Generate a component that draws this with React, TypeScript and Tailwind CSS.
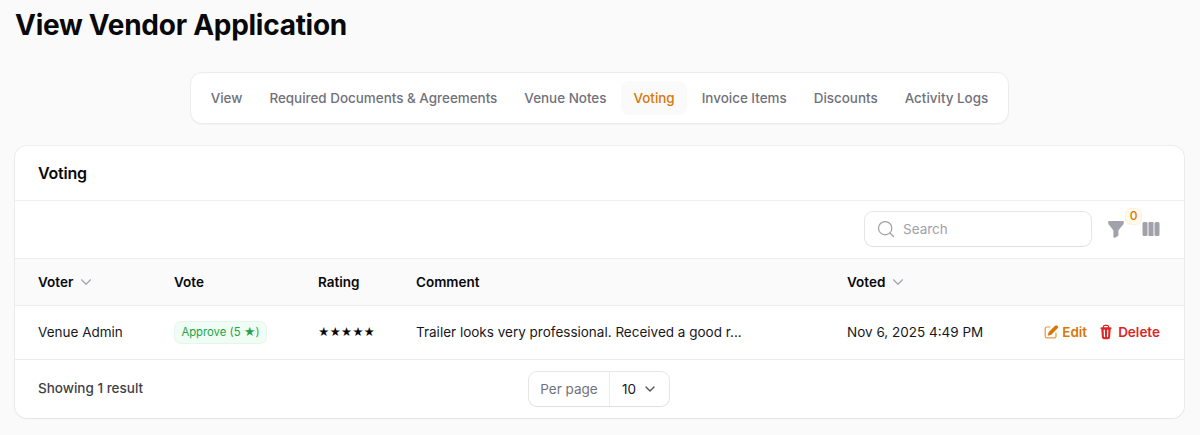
import React from "react";
import { ChevronDown, Search } from "lucide-react";

const tabs = ["View", "Required Documents & Agreements", "Venue Notes", "Voting", "Invoice Items", "Discounts", "Activity Logs"];

function SortHead({ label }: { label: string }) {
  return (
    <span className="flex items-center gap-[4px]">
      <span>{label}</span>
      <ChevronDown className="h-[18px] w-[18px] text-[#a1a1aa]" strokeWidth={1.5} />
    </span>
  );
}

export default function App() {
  return (
    <div className="h-[435px] w-[1200px] overflow-hidden bg-[#fafafa] px-[15px] font-['Inter',sans-serif] text-[#09090b]">
      <h1 className="pt-[7px] text-[28px] font-bold leading-[36px] tracking-[-0.27px]">View Vendor Application</h1>

      <div className="mt-[29px] flex w-[1169px] justify-center">
        <nav className="flex gap-x-[3px] rounded-xl border border-[#ececee] bg-white px-[7.5px] py-[8px] shadow-[0_1px_1px_rgba(0,0,0,0.03)]">
          {tabs.map((t) => (
            <span
              key={t}
              className={
                "rounded-lg px-3 py-[7px] text-[13.43px] font-medium leading-5 " +
                (t === "Voting" ? "bg-[#fafafa] text-[#d97706]" : "text-[#71717a]")
              }
            >
              {t}
            </span>
          ))}
        </nav>
      </div>

      <section className="mt-[22px] w-[1169px] overflow-hidden rounded-xl bg-white shadow-[0_1px_2px_rgba(0,0,0,0.04)] ring-1 ring-[#09090b]/5">
        <header className="flex h-[55px] items-center border-b border-[#f0f0f1] px-[23px] text-base font-semibold leading-6 tracking-[-0.2px]">
          Voting
        </header>

        <div className="flex h-[58px] items-center justify-end gap-x-4 border-b border-[#ececee] pb-[2px] pl-6 pr-[23px]">
          <label className="mr-[-1px] flex h-[34px] w-[226px] items-center gap-x-[7px] rounded-lg bg-white px-[11px] shadow-[0_1px_1px_rgba(0,0,0,0.03)] ring-1 ring-[#09090b]/10">
            <Search className="h-5 w-5 shrink-0 text-[#a1a1aa]" strokeWidth={1.5} />
            <span className="text-[13.5px] leading-5 text-[#a1a1aa]">Search</span>
          </label>
          <div className="relative flex items-center">
            <svg viewBox="0 0 20 20" className="h-5 w-5 text-[#a1a1aa]" fill="currentColor">
              <path d="M2.2 2.9C2.2 2.4 2.7 2 3.3 2h13.4c.6 0 1.1.4 1.1.9 0 1.4-.3 2.6-1 3.2l-3.9 4.6c-.4.4-.5.9-.5 1.4v4.1c0 .4-.2.7-.5.9l-3 1.6c-.7.4-1.5-.1-1.5-.9v-5.7c0-.5-.2-1-.5-1.4L3.2 6.1c-.6-.6-1-1.8-1-3.2z" />
            </svg>
            <span className="absolute -top-[10px] left-[20px] flex h-[15px] min-w-[15px] items-center justify-center rounded-[5px] bg-[#fffbeb] px-[2px] text-[12px] font-medium leading-none text-[#d97706] ring-1 ring-[#d97706]/10">
              0
            </span>
          </div>
          <svg viewBox="0 0 20 20" className="ml-[-1px] h-5 w-5 text-[#a1a1aa]" fill="currentColor">
            <rect x="1.5" y="3" width="5" height="14" rx="1.5" />
            <rect x="7.5" y="3" width="5" height="14" />
            <rect x="13.5" y="3" width="5" height="14" rx="1.5" />
          </svg>
        </div>

        <table className="w-full table-fixed text-left text-[13.5px] leading-5">
          <thead>
            <tr className="h-[46px] border-b border-[#ececee] bg-[#fafafa]">
              <th className="w-[135px] pl-[23px] font-semibold"><SortHead label="Voter" /></th>
              <th className="w-[144px] pl-6 font-semibold">Vote</th>
              <th className="w-[98px] pl-6 font-semibold">Rating</th>
              <th className="w-[431px] pl-6 font-semibold">Comment</th>
              <th className="w-[190px] pl-6 font-semibold"><SortHead label="Voted" /></th>
              <th />
            </tr>
          </thead>
          <tbody>
            <tr className="h-[54px] border-b border-[#ececee]">
              <td className="pl-[23px] text-[#18181b]">Venue Admin</td>
              <td className="pl-[25px]">
                <span className="inline-flex h-[21px] w-[91px] items-center justify-center whitespace-nowrap rounded-md bg-[#f0fdf4] text-[11.3px] font-normal text-[#22a34a] ring-1 ring-[#16a34a]/10">
                  Approve (5 ★)
                </span>
              </td>
              <td className="pl-6 text-[11px] tracking-[-0.1px]">★★★★★</td>
              <td className="whitespace-nowrap pl-6 text-[#18181b]">Trailer looks very professional. Received a good r...</td>
              <td className="whitespace-nowrap pl-6 text-[#18181b]">Nov 6, 2025 4:49 PM</td>
              <td className="pr-6">
                <div className="flex items-center justify-end gap-x-[11px] font-semibold">
                  <span className="flex items-center gap-x-[3px] text-[#d97706]">
                    <svg viewBox="0 0 20 20" className="h-[16px] w-[16px]" fill="currentColor">
                      <path d="M18 2.2a2 2 0 0 0-2.9 0l-7.3 7.3a4 4 0 0 0-1 1.6l-.8 2.6a.6.6 0 0 0 .8.8l2.6-.8a4 4 0 0 0 1.6-1l7.3-7.3a2 2 0 0 0 0-2.9l-.3-.3z" />
                      <path opacity="0.75" d="M4.8 3A2.8 2.8 0 0 0 2 5.8v9.4A2.8 2.8 0 0 0 4.8 18h9.4a2.8 2.8 0 0 0 2.8-2.8V11a.8.8 0 0 0-1.5 0v4.2c0 .7-.6 1.3-1.3 1.3H4.8c-.7 0-1.3-.6-1.3-1.3V5.8c0-.7.6-1.3 1.3-1.3H9A.8.8 0 0 0 9 3H4.8z" />
                    </svg>
                    Edit
                  </span>
                  <span className="flex items-center gap-x-[4px] text-[#dc2626]">
                    <svg viewBox="0 0 20 20" className="h-[16px] w-[16px]" fill="currentColor">
                      <path fillRule="evenodd" clipRule="evenodd" d="M8.75 1A2.75 2.75 0 0 0 6 3.75v.44c-.8.08-1.58.17-2.37.29a.75.75 0 1 0 .22 1.48l.15-.02.94 11.25A2.75 2.75 0 0 0 7.68 19h4.64a2.75 2.75 0 0 0 2.74-2.81L16 5.94l.15.02a.75.75 0 1 0 .22-1.48c-.79-.12-1.58-.21-2.37-.29v-.44A2.75 2.75 0 0 0 11.25 1h-2.5zM10 4c.84 0 1.67.03 2.5.08v-.33c0-.69-.56-1.25-1.25-1.25h-2.5c-.69 0-1.25.56-1.25 1.25v.33C8.33 4.03 9.16 4 10 4zM8.58 7.72a.75.75 0 0 0-1.5.06l.3 8a.75.75 0 1 0 1.5-.06l-.3-8zm4.34.06a.75.75 0 1 0-1.5-.06l-.3 8a.75.75 0 1 0 1.5.06l.3-8z" />
                    </svg>
                    Delete
                  </span>
                </div>
              </td>
            </tr>
          </tbody>
        </table>

        <footer className="relative flex h-[58px] items-center px-[23px] pb-[1px] text-[13.5px] leading-5 text-[#18181b]">
          <span className="font-medium text-[#3f3f46]">Showing 1 result</span>
          <div className="absolute left-[514px] top-[12px] flex h-[34px] items-center rounded-lg bg-white shadow-[0_1px_1px_rgba(0,0,0,0.03)] ring-1 ring-[#09090b]/10">
            <span className="flex h-full w-[81px] items-center justify-center border-r border-[#ececee] text-[#71717a]">Per page</span>
            <span className="flex w-[59px] items-center justify-between pl-[12px] pr-[11px]">
              10
              <ChevronDown className="h-[16px] w-[16px] text-[#52525b]" strokeWidth={2} />
            </span>
          </div>
        </footer>
      </section>
    </div>
  );
}
